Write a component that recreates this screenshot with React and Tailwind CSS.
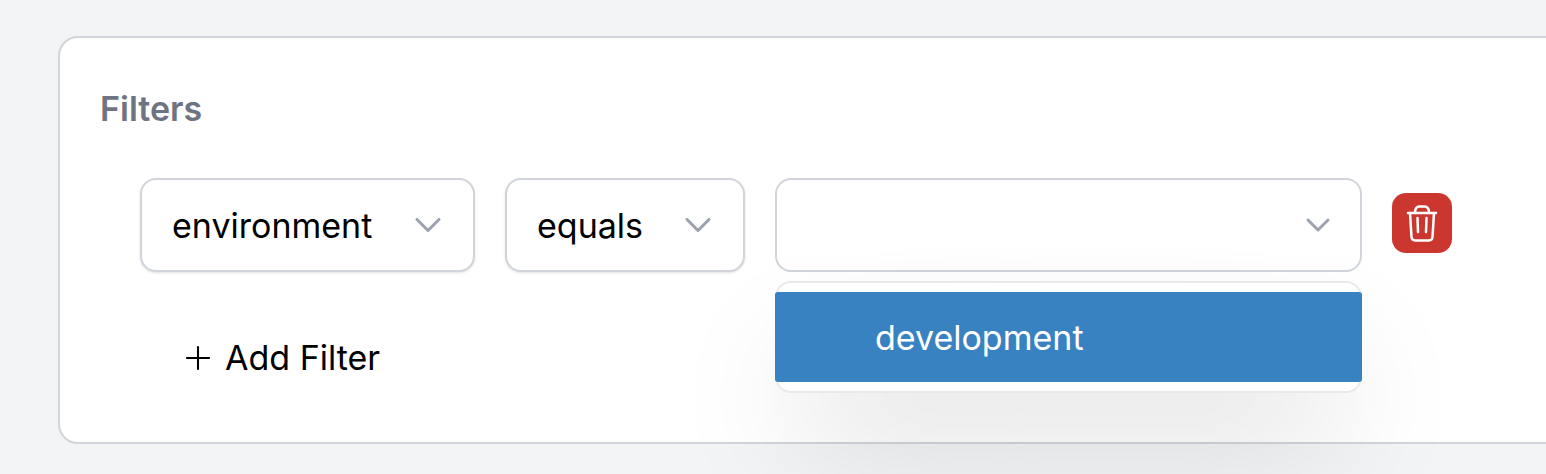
import { ChevronDown, Plus } from "lucide-react";

const Select = ({ label, width }) => {
    return (
        <div className={`${width} h-[94px] flex items-center justify-between pl-[30px] pr-[23px] bg-white border-2 border-[#d1d5db] rounded-[16px] shadow-sm`}>
            <span className="text-[34px] leading-[48px] text-black translate-y-[1px]">{label}</span>
            <ChevronDown className="w-[44px] h-[44px] text-[#9ca3af]" strokeWidth={1.7} />
        </div>
    );
};

const App = () => {
    return (
        <div className="w-[1546px] h-[474px] overflow-hidden bg-[#f3f4f6] pt-[36px] pl-[58px] font-['Inter',sans-serif]">
            <div className="w-[1600px] h-[408px] bg-white border-2 border-[#d1d5db] rounded-[20px] pl-[40px] pt-[51px]">
                <h2 className="text-[34px] leading-[40px] font-semibold text-[#6f7482]">Filters</h2>
                <div className="flex items-center gap-[30px] mt-[49px] ml-[40px]">
                    <Select label="environment" width="w-[335px]" />
                    <Select label="equals" width="w-[240px]" />
                    <div className="relative">
                        <div className="w-[587px] h-[94px] flex items-center justify-end pr-[22px] bg-white border-2 border-[#d1d5db] rounded-[16px]">
                            <ChevronDown className="w-[40px] h-[40px] text-[#9ca3af]" strokeWidth={1.8} />
                        </div>
                        <div className="absolute left-0 top-[103px] w-[587px] h-[112px] py-[9px] bg-white border-2 border-[#e9e9ea] rounded-[16px] shadow-[0_60px_130px_-24px_rgba(0,0,0,0.18)]">
                            <div className="h-[90px] -mx-[2px] flex items-center pl-[100px] bg-[#3982c2] rounded-[3px] text-white text-[34px]">
                                development
                            </div>
                        </div>
                    </div>
                    <button className="w-[60px] h-[60px] -mt-[4px] flex items-center justify-center bg-[#cb372e] rounded-[14px]">
                        <svg className="w-[36px] h-[38px]" viewBox="0 0 36 38" fill="none" stroke="white" strokeWidth="2.5" strokeLinecap="round" strokeLinejoin="round">
                            <path d="M4 9H32" />
                            <path d="M11 9C11 4.500 12.500 2.500 15.500 2.500H20.500C23.500 2.500 25 4.500 25 9" />
                            <path d="M6 9L7.500 33Q7.800 36.500 11 36.500H25Q28.200 36.500 28.500 33L30 9" />
                            <path d="M13.500 14L14 28M22.500 14L22 28" />
                        </svg>
                    </button>
                </div>
                <button className="flex items-center gap-[8px] mt-[62px] ml-[79px] text-[34px] leading-[48px] text-black">
                    <Plus className="w-[38px] h-[38px]" strokeWidth={1.3} />
                    Add Filter
                </button>
            </div>
        </div>
    );
};

export default App;
